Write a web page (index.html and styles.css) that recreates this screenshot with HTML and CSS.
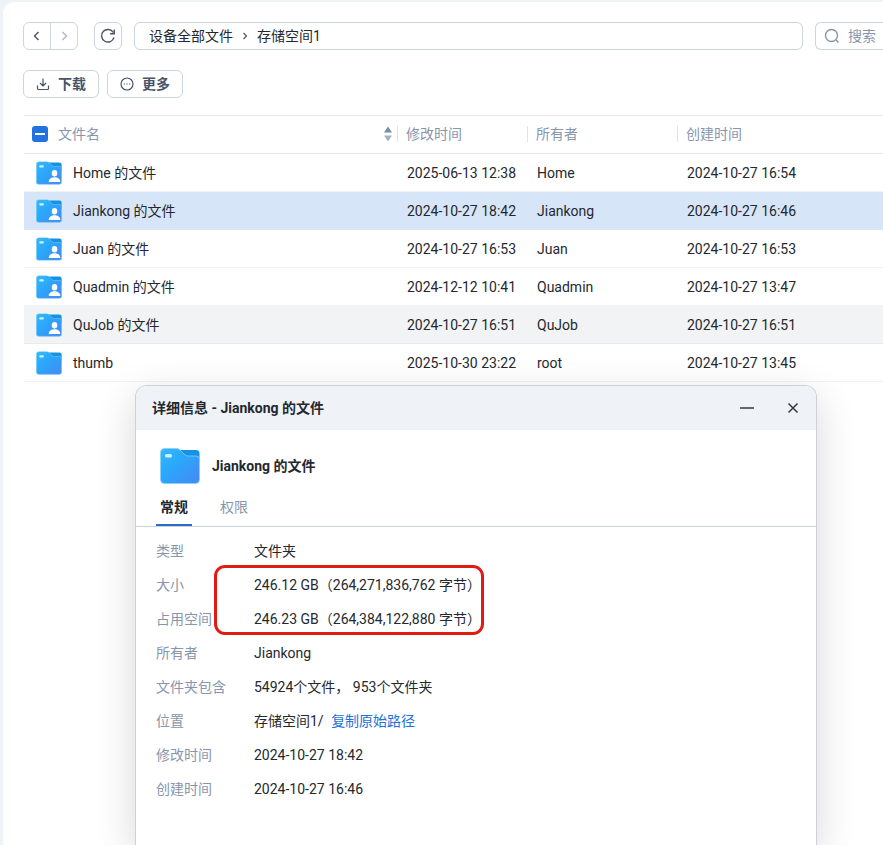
FILE: index.html
```
<!DOCTYPE html>
<html lang="zh-CN">
<head>
<meta charset="utf-8">
<title>存储空间1</title>
<link rel="stylesheet" href="styles.css">
</head>
<body>
<svg class="defs" aria-hidden="true">
  <defs>
    <linearGradient id="front" x1="0" y1="0" x2="1" y2="1">
      <stop offset="0" stop-color="#38b8fb"/>
      <stop offset="0.4" stop-color="#2aa8fa"/>
      <stop offset="1" stop-color="#4688f5"/>
    </linearGradient>
    <symbol id="folder" viewBox="0 0 40 36">
      <path d="M18 2h18q3.500 0 3.500 3.500V15H18z" fill="#1592e4"/>
      <path d="M4.500 .5h12q1.800 0 3.200 1.200l5 5q1.500 1.300 3.500 1.300h8q3.300 0 3.300 3.500V31.500q0 4-4 4h-31q-4 0-4-4V4.500q0-4 4-4z" fill="url(#front)" stroke="#7fd3fb" stroke-width=".8"/>
      <rect x="5" y="6" width="7" height="3.500" rx="1.500" fill="#c9f6ff"/>
    </symbol>
    <symbol id="user-folder" viewBox="0 0 40 36">
      <use href="#folder"/>
      <ellipse cx="28.500" cy="18.500" rx="4.200" ry="5" fill="#fff"/>
      <path d="M19.500 32q0-6 7-7.500h4q7 1.500 7 7.500z" fill="#fff"/>
    </symbol>
  </defs>
</svg>
<main class="panel">
  <div class="toolbar">
    <div class="history">
      <button type="button" aria-label="后退"><svg width="16" height="16" viewBox="0 0 16 16"><path d="M9.500 4L5.500 8l4 4"/></svg></button>
      <button type="button" class="off" aria-label="前进"><svg width="16" height="16" viewBox="0 0 16 16"><path d="M6.500 4l4 4-4 4"/></svg></button>
    </div>
    <button type="button" class="refresh" aria-label="刷新"><svg width="16" height="16" viewBox="0 0 16 16"><path d="M14 9.300A6.300 6.300 0 1 1 13.300 4.500M14.300 1.500v4.200h-4.200"/></svg></button>
    <nav class="path">
      <a href="#">设备全部文件</a>
      <svg width="8" height="8" viewBox="0 0 8 8"><path d="M2.500 1l3 3-3 3"/></svg>
      <a href="#">存储空间1</a>
    </nav>
    <label class="search">
      <svg width="16" height="16" viewBox="0 0 16 16"><circle cx="7.500" cy="7.500" r="6"/><path d="M12 12l2.500 2.500"/></svg>
      <input type="text" placeholder="搜索" aria-label="搜索">
    </label>
  </div>
  <div class="actions">
    <button type="button"><svg width="14" height="14" viewBox="0 0 14 14"><path d="M1.500 8.500v3q0 1 1 1h9q1 0 1-1v-3M7 1.500v7M4 6l3 3 3-3"/></svg>下载</button>
    <button type="button"><svg width="14" height="14" viewBox="0 0 14 14"><circle cx="7" cy="7" r="6"/><path d="M3.700 7h1.200M6.400 7h1.200M9.100 7h1.200"/></svg>更多</button>
  </div>
  <table class="files">
    <colgroup><col class="c-name"><col class="c-modified"><col class="c-owner"><col></colgroup>
    <thead>
      <tr>
        <th><div class="head"><button type="button" class="check" aria-label="全选"></button><span>文件名</span><svg class="sort" width="8" height="16" viewBox="0 0 8 16"><path d="M4 .5L8 6.500H0z" fill="#7b8ca5"/><path d="M4 15.500L0 9.500h8z" fill="#a3b1c5"/></svg></div></th>
        <th><div class="head">修改时间</div></th>
        <th><div class="head">所有者</div></th>
        <th><div class="head">创建时间</div></th>
      </tr>
    </thead>
    <tbody>
      <tr><td><div class="name"><svg class="icon"><use href="#user-folder"/></svg>Home 的文件</div></td><td>2025-06-13 12:38</td><td>Home</td><td>2024-10-27 16:54</td></tr>
      <tr class="selected"><td><div class="name"><svg class="icon"><use href="#user-folder"/></svg>Jiankong 的文件</div></td><td>2024-10-27 18:42</td><td>Jiankong</td><td>2024-10-27 16:46</td></tr>
      <tr><td><div class="name"><svg class="icon"><use href="#user-folder"/></svg>Juan 的文件</div></td><td>2024-10-27 16:53</td><td>Juan</td><td>2024-10-27 16:53</td></tr>
      <tr><td><div class="name"><svg class="icon"><use href="#user-folder"/></svg>Quadmin 的文件</div></td><td>2024-12-12 10:41</td><td>Quadmin</td><td>2024-10-27 13:47</td></tr>
      <tr class="hovered"><td><div class="name"><svg class="icon"><use href="#user-folder"/></svg>QuJob 的文件</div></td><td>2024-10-27 16:51</td><td>QuJob</td><td>2024-10-27 16:51</td></tr>
      <tr><td><div class="name"><svg class="icon"><use href="#folder"/></svg>thumb</div></td><td>2025-10-30 23:22</td><td>root</td><td>2024-10-27 13:45</td></tr>
    </tbody>
  </table>
</main>
<section class="dialog" role="dialog" aria-labelledby="dialog-title">
  <header class="titlebar">
    <h1 id="dialog-title">详细信息 - Jiankong 的文件</h1>
    <button type="button" aria-label="最小化"><svg width="14" height="14" viewBox="0 0 14 14"><path d="M0 7h14"/></svg></button>
    <button type="button" aria-label="关闭"><svg width="14" height="14" viewBox="0 0 14 14"><path d="M2.500 2.500l9 9M11.500 2.500l-9 9"/></svg></button>
  </header>
  <div class="summary"><svg class="big-icon"><use href="#folder"/></svg><h2>Jiankong 的文件</h2></div>
  <div class="tabs" role="tablist">
    <button type="button" role="tab" aria-selected="true">常规</button>
    <button type="button" role="tab" aria-selected="false">权限</button>
  </div>
  <dl class="details">
    <dt>类型</dt><dd>文件夹</dd>
    <dt>大小</dt><dd>246.12 GB（264,271,836,762 字节）</dd>
    <dt>占用空间</dt><dd>246.23 GB（264,384,122,880 字节）</dd>
    <dt>所有者</dt><dd>Jiankong</dd>
    <dt>文件夹包含</dt><dd>54924个文件， 953个文件夹</dd>
    <dt>位置</dt><dd>存储空间1/ <a href="#">复制原始路径</a></dd>
    <dt>修改时间</dt><dd>2024-10-27 18:42</dd>
    <dt>创建时间</dt><dd>2024-10-27 16:46</dd>
    <div class="highlight"></div>
  </dl>
</section>
</body>
</html>
```
FILE: styles.css
```
* { box-sizing: border-box; }

body {
  margin: 0;
  min-height: 100vh;
  padding: 2px 0 0 3px;
  background: #eff3f8;
  color: #24282e;
  font: 14px/20px Roboto, "Noto Sans CJK SC", sans-serif;
  overflow: hidden;
}

button, input { font: inherit; color: inherit; }
button { padding: 0; background: none; border: 0; }
a { color: inherit; text-decoration: none; }
svg { flex: none; fill: none; stroke: none; }
.defs { position: absolute; width: 0; height: 0; }

.panel {
  min-height: calc(100vh - 2px);
  padding: 20px 0 0 20px;
  background: #fff;
  border-top-left-radius: 12px;
}

.toolbar { display: flex; gap: 12px; height: 28px; }
.toolbar svg, .actions svg { stroke: #465468; stroke-width: 1.4; }

.history {
  display: flex;
  width: 55px;
  margin-right: 4px;
  border: 1px solid #ccd5df;
  border-radius: 6px;
}
.history button { flex: 1; display: grid; place-items: center; }
.history .off { border-left: 1px solid #ccd5df; }
.history .off svg { stroke: #a8b7ca; }

.refresh {
  display: grid;
  place-items: center;
  width: 28px;
  border: 1px solid #ccd5df;
  border-radius: 6px;
}

.path {
  flex: 1;
  display: flex;
  align-items: center;
  gap: 8px;
  padding-left: 14px;
  border: 1px solid #ccd5df;
  border-radius: 6px;
}
.path svg { stroke-width: 1.2; }

.search {
  display: flex;
  align-items: center;
  gap: 8px;
  width: 68px;
  padding-left: 8px;
  border: 1px solid #ccd5df;
  border-right: 0;
  border-radius: 6px 0 0 6px;
}
.search svg { stroke: #8494aa; }
.search input { width: 100%; min-width: 0; padding: 0; border: 0; outline: 0; background: none; }
.search input::placeholder { color: #8796ac; opacity: 1; }

.actions { display: flex; gap: 8px; margin-top: 20px; }
.actions button {
  display: flex;
  align-items: center;
  justify-content: center;
  gap: 8px;
  width: 76px;
  height: 28px;
  border: 1px solid #ccd5df;
  border-radius: 6px;
  color: #465468;
  font-weight: 700;
}
.actions svg { stroke-width: 1.2; }

.files {
  width: calc(100% - 1px);
  margin: 17px 0 0 1px;
  table-layout: fixed;
  border-collapse: separate;
  border-spacing: 0;
}
.c-name { width: 374px; }
.c-modified { width: 130px; }
.c-owner { width: 150px; }

.files th {
  height: 39px;
  padding: 0 0 1px;
  border-top: 1px solid #e5e7ea;
  border-bottom: 1px solid #e5e7ea;
  color: #8796ac;
  font-weight: 400;
  text-align: left;
}
.head { display: flex; align-items: center; gap: 10px; height: 16px; padding-left: 8px; }
th:not(:last-child) .head { border-right: 1px solid #dfe4ea; }
.sort { margin: 0 5px 0 auto; }

.check {
  display: grid;
  place-items: center;
  width: 16px;
  height: 16px;
  border-radius: 3px;
  background: #2272df;
}
.check::before { content: ""; width: 10px; height: 2px; background: #fff; }

.files td { height: 38px; padding: 0 0 0 9px; border-bottom: 1px solid #f0f2f4; }
.files td:first-child { padding-left: 12px; }
.name { display: flex; align-items: center; gap: 11px; }
.icon { width: 26px; height: 24px; }
.selected td { background: #d7e5f8; border-color: #d7e5f8; }
.hovered td { background: #f1f3f5; border-color: #e8ebee; }

.dialog {
  position: absolute;
  top: 385px;
  right: 66px;
  bottom: 0;
  left: 135px;
  border: 1px solid #cdd0d4;
  border-bottom: 0;
  border-radius: 12px 12px 0 0;
  background: #fff;
  box-shadow: 0 12px 40px rgba(0, 0, 0, .16);
}

.titlebar {
  display: flex;
  align-items: center;
  gap: 32px;
  height: 44px;
  padding: 0 16px;
  border-radius: 11px 11px 0 0;
  background: #eff3f8;
}
h1, h2 { margin: 0; font-size: 14px; line-height: 20px; font-weight: 700; }
h1 { flex: 1; }
.titlebar button { display: grid; place-items: center; }
.titlebar svg { stroke: #34383f; stroke-width: 1.5; }

.summary { display: flex; align-items: center; gap: 12px; padding: 18px 24px 0; }
.big-icon { width: 40px; height: 36px; }

.tabs {
  display: flex;
  gap: 24px;
  margin-top: 6px;
  padding: 0 20px;
  border-bottom: 1px solid #ccd2dc;
}
.tabs button { width: 36px; height: 36px; border-bottom: 2px solid transparent; color: #8796ac; }
.tabs button[aria-selected="true"] { border-color: #2c6cc8; color: #24282e; font-weight: 700; }

.details {
  position: relative;
  display: grid;
  grid-template-columns: 98px 1fr;
  margin: 0;
  padding: 7px 20px;
  line-height: 34px;
}
.details dt { color: #8796ac; }
.details dd { margin: 0; }
.details a { margin-left: 4px; color: #2272d8; }

.highlight {
  position: absolute;
  top: 38px;
  left: 78px;
  width: 270px;
  height: 70px;
  border: 3px solid #e01b13;
  border-radius: 11px;
}
```
